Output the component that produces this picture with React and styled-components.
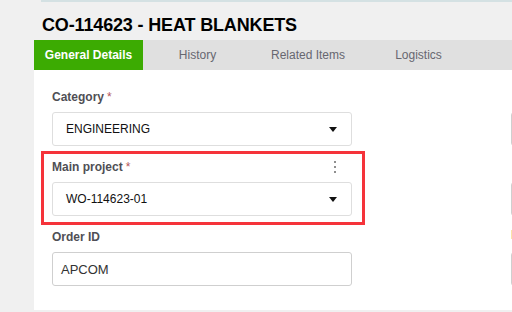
import React from "react";
import styled, { createGlobalStyle } from "styled-components";

const Global = createGlobalStyle`
  html, body { margin: 0; padding: 0; background: #f0f0f0; overflow: hidden; }
  body { font-family: "Liberation Sans", Arial, sans-serif; width: 512px; height: 312px; }
`;

const Page = styled.div`
  width: 512px;
  height: 312px;
  overflow: hidden;
  background: #f0f0f0;
`;

const TopStrip = styled.div`
  margin-left: 41px;
  height: 2px;
  background: #d4e1e3;
`;

const Title = styled.h1`
  margin: 0;
  padding: 12px 0 0 42px;
  height: 26px;
  font-size: 18px;
  line-height: 22px;
  font-weight: bold;
  color: #000;
  letter-spacing: -0.15px;
`;

const TabBar = styled.div`
  margin-left: 34px;
  height: 30px;
  display: flex;
  background: #e0e0e0;
`;

const Tab = styled.div`
  width: ${(p) => p.$w || 109}px;
  display: flex;
  align-items: center;
  justify-content: center;
  font-size: 12px;
  color: ${(p) => (p.$active ? "#fff" : "#676770")};
  font-weight: ${(p) => (p.$active ? "bold" : "normal")};
  background: ${(p) => (p.$active ? "#3cab02" : "transparent")};
`;

const Panel = styled.div`
  margin-left: 34px;
  width: 700px;
  height: 240px;
  box-sizing: border-box;
  background: #fff;
  padding: 17px 0 0 18px;
  display: grid;
  grid-template-columns: 300px 300px;
  column-gap: 159px;
`;

const Column = styled.div`
  display: flex;
  flex-direction: column;
  gap: 11px;
`;

const Field = styled.div`
  display: flex;
  flex-direction: column;
`;

const Highlight = styled.div`
  border: 3px solid #f5333a;
  padding: 3px 10px 6px 8px;
  margin: -6px -13px -9px -11px;
`;

const LabelRow = styled.div`
  height: 20px;
  margin-bottom: 5px;
  display: flex;
  align-items: center;
  justify-content: space-between;
  padding-right: 14px;
`;

const Label = styled.label`
  font-size: 12px;
  font-weight: bold;
  color: #4f4f55;
`;

const Req = styled.span`
  color: #b5555a;
  font-weight: normal;
  margin-left: 3px;
`;

const Box = styled.div`
  height: 34px;
  box-sizing: border-box;
  border: 1px solid ${(p) => (p.$dark ? "#cfcfcf" : "#dedede")};
  border-radius: 3px;
  display: flex;
  align-items: center;
  justify-content: space-between;
  padding: 0 14px 0 ${(p) => p.$pl || 13}px;
  font-size: ${(p) => p.$fs || 12}px;
  color: ${(p) => p.$color || "#111"};
  background: #fff;
`;

const Caret = styled.span`
  width: 0;
  height: 0;
  border-left: 4.5px solid transparent;
  border-right: 4.5px solid transparent;
  border-top: 5px solid #111;
  margin-top: 1px;
`;

const Kebab = styled.span`
  display: flex;
  flex-direction: column;
  gap: 3px;
  padding-right: 2px;
  & > i {
    width: 2px;
    height: 2px;
    background: #6a6a6a;
    border-radius: 1px;
  }
`;

const WarnMark = styled.div`
  height: 9px;
  width: 3px;
  background: #fbe3a8;
  margin-top: -6px;
`;

export default function App() {
  return (
    <Page>
      <Global />
      <TopStrip />
      <Title>CO-114623 - HEAT BLANKETS</Title>
      <TabBar>
        <Tab $active>General Details</Tab>
        <Tab>History</Tab>
        <Tab $w={112}>Related Items</Tab>
        <Tab>Logistics</Tab>
      </TabBar>
      <Panel>
        <Column>
          <Field>
            <LabelRow>
              <Label>
                Category<Req>*</Req>
              </Label>
            </LabelRow>
            <Box>
              ENGINEERING
              <Caret />
            </Box>
          </Field>
          <Highlight>
            <Field>
              <LabelRow>
                <Label>
                  Main project<Req>*</Req>
                </Label>
                <Kebab>
                  <i />
                  <i />
                  <i />
                </Kebab>
              </LabelRow>
              <Box>
                WO-114623-01
                <Caret />
              </Box>
            </Field>
          </Highlight>
          <Field>
            <LabelRow>
              <Label>Order ID</Label>
            </LabelRow>
            <Box $dark $pl={8} $fs={13} $color="#333">
              APCOM
            </Box>
          </Field>
        </Column>
        <Column>
          <Field>
            <LabelRow />
            <Box $dark />
          </Field>
          <Field>
            <LabelRow />
            <Box $dark />
          </Field>
          <Field>
            <LabelRow>
              <WarnMark />
            </LabelRow>
            <Box $dark />
          </Field>
        </Column>
      </Panel>
    </Page>
  );
}
